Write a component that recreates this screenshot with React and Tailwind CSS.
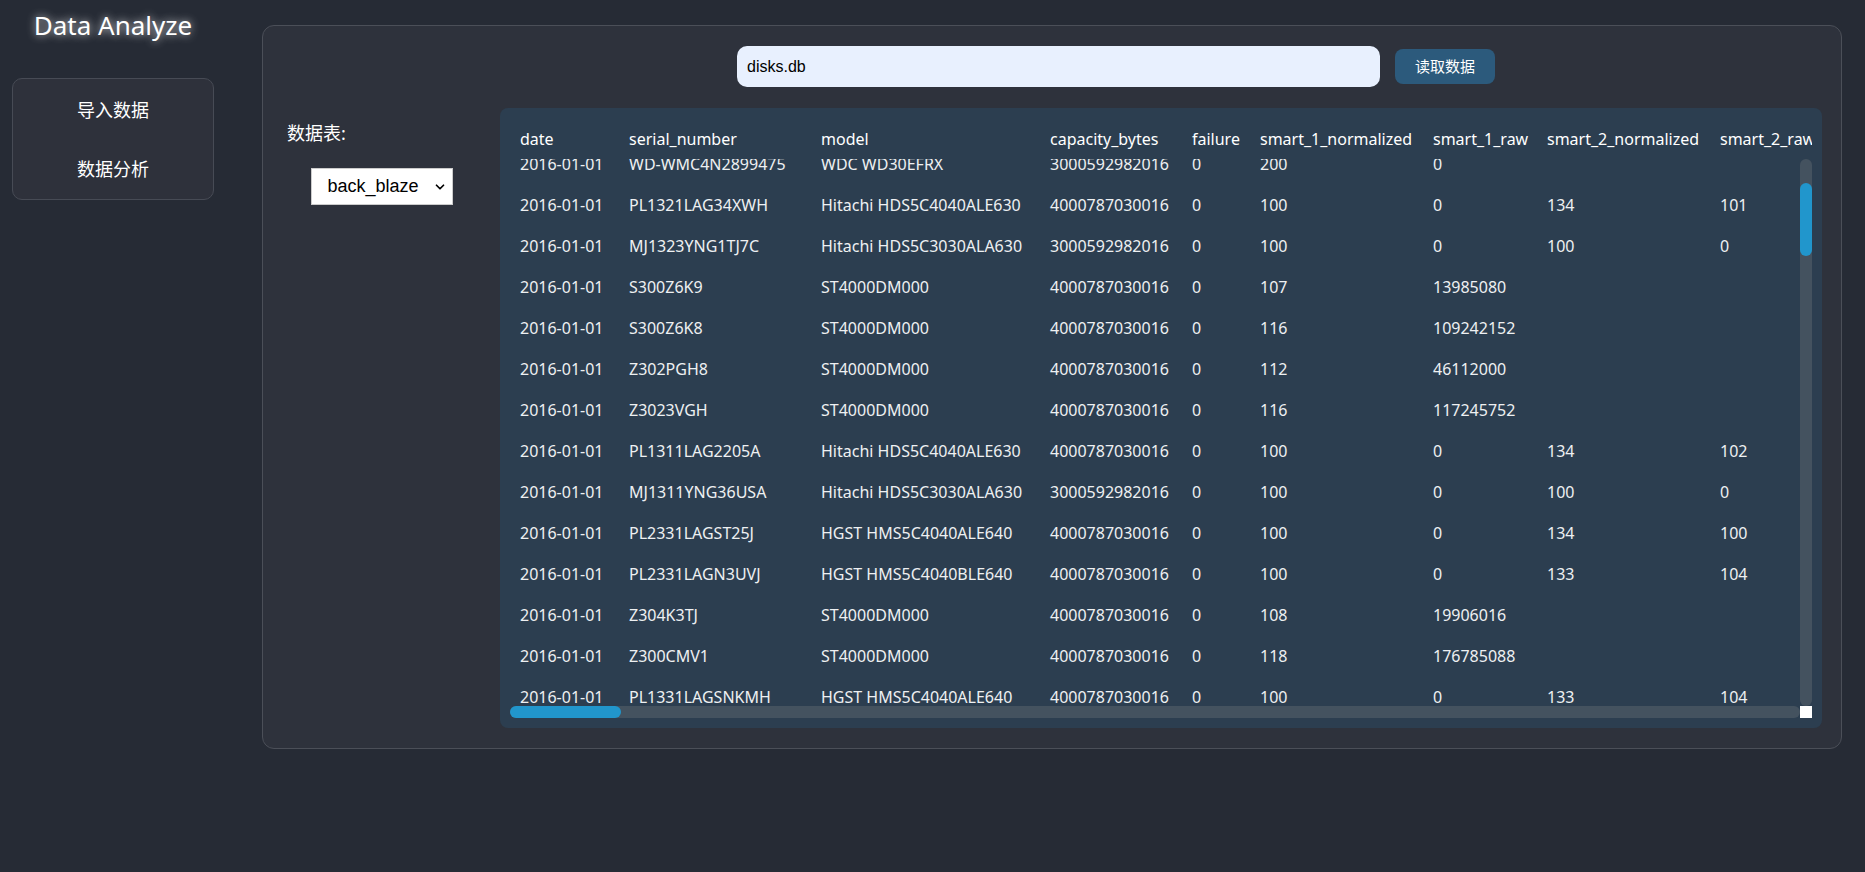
import { ChevronDown } from "lucide-react";

const columns = [
  { key: "date", label: "date", w: "w-[109px]" },
  { key: "serial", label: "serial_number", w: "w-[192px]" },
  { key: "model", label: "model", w: "w-[229px]" },
  { key: "capacity", label: "capacity_bytes", w: "w-[142px]" },
  { key: "failure", label: "failure", w: "w-[68px]" },
  { key: "s1n", label: "smart_1_normalized", w: "w-[173px]" },
  { key: "s1r", label: "smart_1_raw", w: "w-[114px]" },
  { key: "s2n", label: "smart_2_normalized", w: "w-[173px]" },
  { key: "s2r", label: "smart_2_raw", w: "w-[173px]" },
];

const rows = [
  ["2016-01-01", "WD-WMC4N2899475", "WDC WD30EFRX", "3000592982016", "0", "200", "0", "", ""],
  ["2016-01-01", "PL1321LAG34XWH", "Hitachi HDS5C4040ALE630", "4000787030016", "0", "100", "0", "134", "101"],
  ["2016-01-01", "MJ1323YNG1TJ7C", "Hitachi HDS5C3030ALA630", "3000592982016", "0", "100", "0", "100", "0"],
  ["2016-01-01", "S300Z6K9", "ST4000DM000", "4000787030016", "0", "107", "13985080", "", ""],
  ["2016-01-01", "S300Z6K8", "ST4000DM000", "4000787030016", "0", "116", "109242152", "", ""],
  ["2016-01-01", "Z302PGH8", "ST4000DM000", "4000787030016", "0", "112", "46112000", "", ""],
  ["2016-01-01", "Z3023VGH", "ST4000DM000", "4000787030016", "0", "116", "117245752", "", ""],
  ["2016-01-01", "PL1311LAG2205A", "Hitachi HDS5C4040ALE630", "4000787030016", "0", "100", "0", "134", "102"],
  ["2016-01-01", "MJ1311YNG36USA", "Hitachi HDS5C3030ALA630", "3000592982016", "0", "100", "0", "100", "0"],
  ["2016-01-01", "PL2331LAGST25J", "HGST HMS5C4040ALE640", "4000787030016", "0", "100", "0", "134", "100"],
  ["2016-01-01", "PL2331LAGN3UVJ", "HGST HMS5C4040BLE640", "4000787030016", "0", "100", "0", "133", "104"],
  ["2016-01-01", "Z304K3TJ", "ST4000DM000", "4000787030016", "0", "108", "19906016", "", ""],
  ["2016-01-01", "Z300CMV1", "ST4000DM000", "4000787030016", "0", "118", "176785088", "", ""],
  ["2016-01-01", "PL1331LAGSNKMH", "HGST HMS5C4040ALE640", "4000787030016", "0", "100", "0", "133", "104"],
];

const uiFont = "font-['Noto_Sans','Noto_Sans_CJK_SC',sans-serif]";

const DataTable = () => (
  <div className="flex-1 bg-[#2c3e50] rounded-lg p-[10px] flex flex-col min-w-0 overflow-hidden">
    <div className="flex flex-col h-full overflow-hidden">
      {/* header */}
      <div className="h-[41px] flex shrink-0 overflow-hidden text-white text-base">
        {columns.map((c) => (
          <div key={c.key} className={`${c.w} shrink-0 px-[10px] flex items-center whitespace-nowrap`}>
            {c.label}
          </div>
        ))}
      </div>

      {/* body + vertical scrollbar */}
      <div className="flex-1 flex min-h-0">
        <div className="flex-1 overflow-hidden">
          <div className="-mt-[16px] text-[#eef0f2] text-base">
            {rows.map((r, i) => (
              <div key={i} className="h-[41px] flex">
                {r.map((v, j) => (
                  <div key={j} className={`${columns[j].w} shrink-0 px-[10px] flex items-center whitespace-nowrap`}>
                    {v}
                  </div>
                ))}
              </div>
            ))}
          </div>
        </div>
        <div className="w-[12px] shrink-0 bg-[#44525f] rounded-full pt-[24px]">
          <div className="h-[73px] bg-[#2196cc] rounded-full" />
        </div>
      </div>

      {/* horizontal scrollbar */}
      <div className="h-[12px] shrink-0 flex">
        <div className="flex-1 bg-[#44525f] rounded-full">
          <div className="w-[111px] h-full bg-[#2196cc] rounded-full" />
        </div>
        <div className="w-[12px] bg-white" />
      </div>
    </div>
  </div>
);

export default function App() {
  return (
    <div className={`w-full h-screen bg-[#262b35] flex ${uiFont}`}>
      {/* left nav */}
      <div className="w-[214px] shrink-0 pl-3 flex flex-col">
        <h1 className="mt-[5px] h-[40px] text-center text-[26px] leading-[40px] text-white [text-shadow:0_0_8px_rgba(255,255,255,0.85)]">
          Data Analyze
        </h1>
        <div className="mt-[33px] bg-[#2e313b] border border-[#474b55] rounded-[10px] pt-[2px] h-[122px] flex flex-col">
          <button className="h-[60px] text-[18px] text-white">导入数据</button>
          <button className="h-[60px] text-[18px] text-white">数据分析</button>
        </div>
      </div>

      {/* main panel */}
      <div className="ml-[48px] mt-[25px] w-[1580px] h-[724px] bg-[#2e323c] border border-[#4b4f58] rounded-xl flex flex-col">
        <div className="flex items-center pl-[474px] pt-[20px]">
          <input
            readOnly
            value="disks.db"
            className="w-[643px] h-[41px] bg-[#e8f0fe] rounded-[10px] px-[10px] text-base text-black font-['Liberation_Sans',Arial,sans-serif] outline-none"
          />
          <button className="ml-[15px] w-[100px] h-[35px] bg-[#2c5a7c] rounded-[8px] text-[15px] text-white">
            读取数据
          </button>
        </div>

        <div className="flex flex-1 mt-[21px] pr-[19px] pb-[20px] min-h-0">
          <div className="w-[237px] shrink-0 flex flex-col">
            <div className="pl-[24px] text-[18px] text-white leading-[24px] mt-[13px]">数据表:</div>
            <div className="relative self-center mt-[23px]">
              <select className="appearance-none w-[142px] h-[37px] bg-white text-black text-[18px] pl-[16px] font-['Liberation_Sans',Arial,sans-serif] outline-none border border-[#ccc]">
                <option>back_blaze</option>
              </select>
              <ChevronDown className="absolute right-[6px] top-[12px] w-[14px] h-[14px] text-black pointer-events-none" strokeWidth={3} />
            </div>
          </div>
          <DataTable />
        </div>
      </div>
    </div>
  );
}
